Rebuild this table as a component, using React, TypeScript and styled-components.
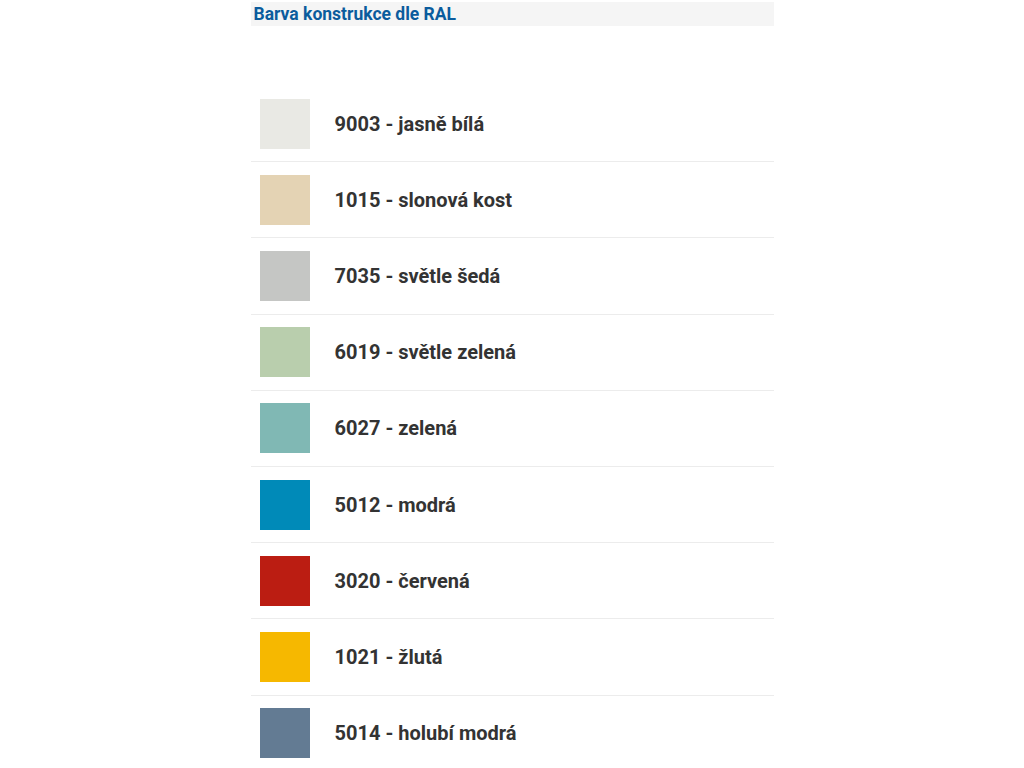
import styled, { createGlobalStyle } from "styled-components";

const colors = [
    { code: "9003", name: "jasně bílá", hex: "#e9e9e4" },
    { code: "1015", name: "slonová kost", hex: "#e4d3b4" },
    { code: "7035", name: "světle šedá", hex: "#c5c6c4" },
    { code: "6019", name: "světle zelená", hex: "#b9cead" },
    { code: "6027", name: "zelená", hex: "#80b8b4" },
    { code: "5012", name: "modrá", hex: "#008ab8" },
    { code: "3020", name: "červená", hex: "#bb1d12" },
    { code: "1021", name: "žlutá", hex: "#f6b800" },
    { code: "5014", name: "holubí modrá", hex: "#637b93" },
];

const GlobalStyle = createGlobalStyle`
    body {
        margin: 0;
        background: #fff;
        font-family: Roboto, "Liberation Sans", sans-serif;
    }
`;

export default function App() {
    return (
        <>
            <GlobalStyle />
            <Page>
                <Heading>Barva konstrukce dle RAL</Heading>
                <List>
                    {colors.map((c) => (
                        <Row key={c.code}>
                            <Swatch $color={c.hex} />
                            <Label>
                                {c.code} - {c.name}
                            </Label>
                        </Row>
                    ))}
                </List>
            </Page>
        </>
    );
}

const Page = styled.div`
    width: 523px;
    margin: 0 auto;
    padding-top: 2px;
`;

const Heading = styled.h3`
    margin: 0;
    height: 24px;
    line-height: 25px;
    padding-left: 3px;
    background: #f5f5f5;
    color: #0b5c9d;
    font-size: 17.5px;
    font-weight: 700;
`;

const List = styled.ul`
    list-style: none;
    margin: 60px 0 0;
    padding: 0;
`;

const Row = styled.li`
    display: flex;
    align-items: center;
    gap: 25px;
    padding: 12.6px 0 12.6px 9px;
    border-bottom: 1px solid #ececec;

    &:last-child {
        border-bottom: none;
    }
`;

const Swatch = styled.span<{ $color: string }>`
    display: block;
    width: 50px;
    height: 50px;
    flex-shrink: 0;
    background: ${(p) => p.$color};
`;

const Label = styled.span`
    color: #333;
    font-size: 20px;
    font-weight: 700;
`;
